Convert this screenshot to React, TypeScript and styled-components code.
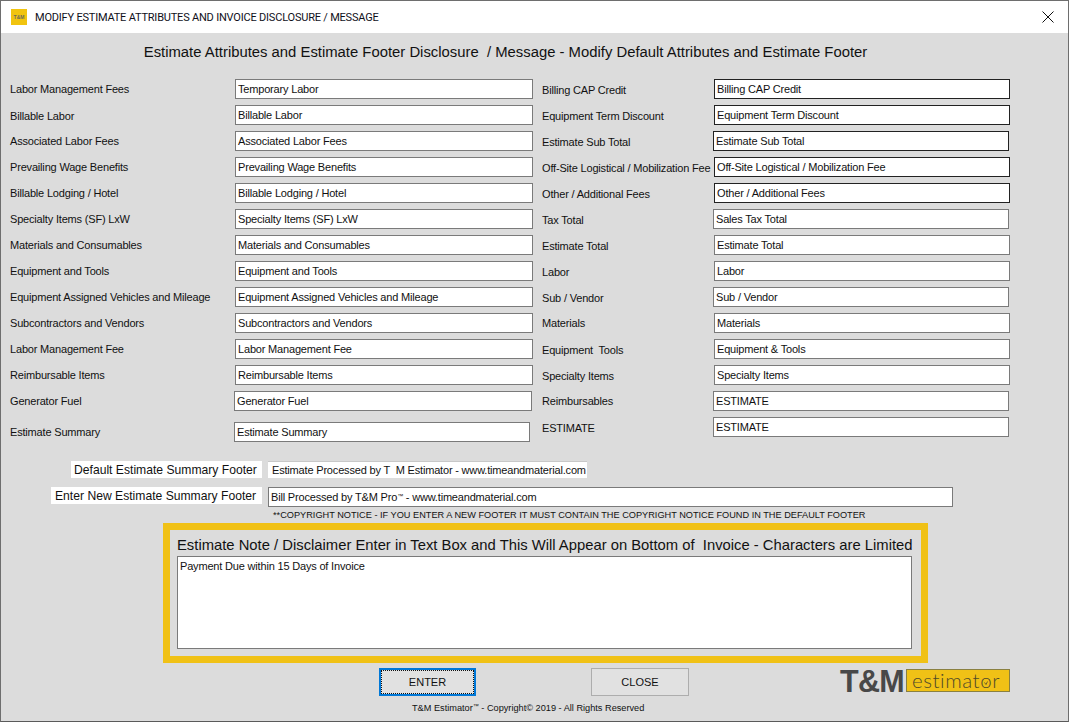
import React from "react";
import styled, { createGlobalStyle } from "styled-components";

const Global = createGlobalStyle`
  html, body { margin: 0; padding: 0; background: #dcdcdc; overflow: hidden; }
  * { box-sizing: border-box; }
`;

const Window = styled.div`
  width: 1069px;
  height: 722px;
  display: flex;
  flex-direction: column;
  background: #dcdcdc;
  border: 1px solid #6e6e6e;
  border-bottom-color: #5a5a5a;
  font-family: "Liberation Sans", Arial, sans-serif;
  color: #111;
  overflow: hidden;
`;
const TitleBar = styled.div`
  height: 32px;
  flex: none;
  background: #fff;
  display: flex;
  align-items: center;
  padding: 0 10px;
`;
const AppIcon = styled.div`
  width: 16px;
  height: 16px;
  background: #f1c40f;
  display: flex;
  align-items: center;
  justify-content: center;
  font-size: 5px;
  font-weight: 700;
  color: #6b6b5a;
  margin-right: 8px;
`;
const TitleText = styled.div`
  font-family: Roboto, sans-serif;
  font-size: 11px;
  letter-spacing: -0.2px;
  color: #10101a;
  flex: 1;
`;
const CloseIcon = styled.svg`
  width: 12px;
  height: 12px;
  margin-right: 4px;
`;
const Heading = styled.h1`
  margin: 10px 0 0;
  height: 36px;
  font-size: 14.85px;
  font-weight: 400;
  line-height: 18px;
  text-align: center;
  padding-right: 58px;
`;
const Columns = styled.div`
  display: grid;
  grid-template-columns: 532px 1fr;
  height: 382px;
`;
const Column = styled.div`
  display: flex;
  flex-direction: column;
`;
const Row = styled.div<{ $gap?: number }>`
  height: 26px;
  flex: none;
  display: flex;
  align-items: flex-start;
  margin-top: ${(p) => p.$gap ?? 0}px;
`;
const Label = styled.div<{ $w: number; $left: number; $down?: number }>`
  width: ${(p) => p.$w}px;
  margin-left: ${(p) => p.$left}px;
  padding-top: ${(p) => 3 + (p.$down ?? 0)}px;
  font-size: 11px;
  letter-spacing: -0.18px;
  line-height: 14px;
  white-space: nowrap;
  flex: none;
`;
const Field = styled.div<{ $w: number; $dark?: boolean }>`
  width: ${(p) => p.$w}px;
  height: 20px;
  flex: none;
  background: #fff;
  border: 1px solid ${(p) => (p.$dark ? "#222" : "#7a7a7a")};
  padding: 0 2px;
  font-size: 11px;
  letter-spacing: -0.18px;
  line-height: 18px;
  white-space: nowrap;
  overflow: hidden;
`;
const FooterRow = styled.div<{ $h: number }>`
  height: ${(p) => p.$h}px;
  flex: none;
  display: flex;
  align-items: flex-start;
`;
const FooterLabel = styled.div<{ $w: number; $left: number; $pad: number }>`
  width: ${(p) => p.$w}px;
  height: 17px;
  margin-left: ${(p) => p.$left}px;
  background: #fff;
  font-size: 12.15px;
  line-height: 19px;
  padding-left: ${(p) => p.$pad}px;
  white-space: nowrap;
  overflow: hidden;
  flex: none;
`;
const FooterValue = styled.div`
  width: 319px;
  height: 17px;
  margin-left: 6px;
  background: #fff;
  border-top: 1px solid #c8c8c8;
  font-size: 11px;
  letter-spacing: -0.18px;
  line-height: 17px;
  padding-left: 4px;
  white-space: nowrap;
`;
const FooterField = styled(Field)`
  margin-left: 6px;
`;
const Notice = styled.div`
  height: 16px;
  flex: none;
  margin-left: 272px;
  font-size: 9.2px;
  line-height: 16px;
  white-space: nowrap;
`;
const NoteBox = styled.section`
  width: 765px;
  height: 140px;
  margin-left: 162px;
  border: 7px solid #f0c116;
  padding: 6px 7px 7px 7px;
  flex: none;
`;
const NoteTitle = styled.div`
  font-size: 14.8px;
  line-height: 18px;
  height: 20px;
  white-space: nowrap;
`;
const NoteArea = styled.div`
  width: 735px;
  height: 93px;
  background: #fff;
  border: 1px solid #7a7a7a;
  padding: 2px;
  font-size: 11px;
  letter-spacing: -0.18px;
  line-height: 14px;
`;
const BottomRow = styled.div`
  margin-top: 5px;
  height: 28px;
  flex: none;
  display: flex;
  align-items: flex-start;
`;
const EnterButton = styled.button`
  width: 97px;
  height: 28px;
  margin-left: 378px;
  background: #e1e1e1;
  border: 2px solid #0078d7;
  outline: 1px dotted #111;
  outline-offset: -3px;
  font: 11px "Liberation Sans", Arial, sans-serif;
  color: #111;
  padding: 0;
`;
const CloseButton = styled.button`
  width: 98px;
  height: 28px;
  margin-left: 115px;
  background: #e1e1e1;
  border: 1px solid #adadad;
  font: 11px "Liberation Sans", Arial, sans-serif;
  color: #111;
  padding: 0;
`;
const Logo = styled.div`
  margin-left: 151px;
  display: flex;
  align-items: center;
  height: 25px;
`;
const LogoMark = styled.div`
  font-size: 30.5px;
  font-weight: 700;
  letter-spacing: -0.7px;
  color: #484848;
  line-height: 25px;
  width: 66px;
  margin-top: 2px;
  white-space: nowrap;
`;
const LogoBadge = styled.div`
  position: relative;
  width: 104px;
  height: 23px;
  background: #f0c116;
  border: 1px solid #8a8040;
  font-family: Lato, sans-serif;
  font-weight: 300;
  font-size: 20.5px;
  letter-spacing: 0.55px;
  line-height: 20px;
  color: #4f4a2a;
  padding-left: 5px;
  white-space: nowrap;
`;
const LogoTick = styled.svg`
  position: absolute;
  left: 74px;
  top: 8px;
  width: 10px;
  height: 10px;
`;
const Copyright = styled.div`
  margin: 6px 0 0 411px;
  font-size: 9.2px;
  line-height: 12px;
  white-space: nowrap;
`;
const Tm = styled.sup`
  font-size: 6px;
  line-height: 0;
  vertical-align: 3px;
`;

type R = { label: string; value: string; gap?: number; left?: number; w?: number; x?: number; down?: number; dark?: boolean };

const leftRows: R[] = [
  { label: "Labor Management Fees", value: "Temporary Labor" },
  { label: "Billable Labor", value: "Billable Labor", down: 1 },
  { label: "Associated Labor Fees", value: "Associated Labor Fees" },
  { label: "Prevailing Wage Benefits", value: "Prevailing Wage Benefits" },
  { label: "Billable Lodging / Hotel", value: "Billable Lodging / Hotel" },
  { label: "Specialty Items (SF) LxW", value: "Specialty Items (SF) LxW" },
  { label: "Materials and Consumables", value: "Materials and Consumables" },
  { label: "Equipment and Tools", value: "Equipment and Tools" },
  { label: "Equipment Assigned Vehicles and Mileage", value: "Equipment Assigned Vehicles and Mileage" },
  { label: "Subcontractors and Vendors", value: "Subcontractors and Vendors" },
  { label: "Labor Management Fee", value: "Labor Management Fee" },
  { label: "Reimbursable Items", value: "Reimbursable Items" },
  { label: "Generator Fuel", value: "Generator Fuel", left: 9, x: 224 },
  { label: "Estimate Summary", value: "Estimate Summary", gap: 5, x: 224, w: 296 },
];

const rightRows: R[] = [
  { label: "Billing CAP Credit", value: "Billing CAP Credit", dark: true, down: 1 },
  { label: "Equipment Term Discount", value: "Equipment Term Discount", dark: true, down: 1 },
  { label: "Estimate Sub Total", value: "Estimate Sub Total", dark: true, x: 171, down: 1 },
  { label: "Off-Site Logistical / Mobilization Fee", value: "Off-Site Logistical / Mobilization Fee", dark: true, down: 1 },
  { label: "Other / Additional Fees", value: "Other / Additional Fees", dark: true, down: 1 },
  { label: "Tax Total", value: "Sales Tax Total", x: 171, down: 1 },
  { label: "Estimate Total", value: "Estimate Total", down: 1 },
  { label: "Labor", value: "Labor", down: 1 },
  { label: "Sub / Vendor", value: "Sub / Vendor", x: 171, down: 1 },
  { label: "Materials", value: "Materials" },
  { label: "Equipment\u00a0 Tools", value: "Equipment & Tools", down: 1 },
  { label: "Specialty Items", value: "Specialty Items", down: 1 },
  { label: "Reimbursables", value: "ESTIMATE", x: 171 },
  { label: "ESTIMATE", value: "ESTIMATE", x: 171, down: 1 },
];

function FieldRow({ r, baseLeft, baseX, baseW }: { r: R; baseLeft: number; baseX: number; baseW: number }) {
  const left = r.left ?? baseLeft;
  const x = r.x ?? baseX;
  return (
    <Row $gap={r.gap}>
      <Label $left={left} $w={baseLeft + x - left} $down={r.down}>{r.label}</Label>
      <Field $w={r.w ?? baseW} $dark={r.dark}>{r.value}</Field>
    </Row>
  );
}

export default function App() {
  return (
    <Window>
      <Global />
      <TitleBar>
        <AppIcon>T&amp;M</AppIcon>
        <TitleText>MODIFY ESTIMATE ATTRIBUTES AND INVOICE DISCLOSURE / MESSAGE</TitleText>
        <CloseIcon viewBox="0 0 12 12">
          <path d="M0.5 0.5 L11.5 11.5 M11.5 0.5 L0.5 11.5" stroke="#111" strokeWidth="1" fill="none" />
        </CloseIcon>
      </TitleBar>
      <Heading>Estimate Attributes and Estimate Footer Disclosure&nbsp; / Message - Modify Default Attributes and Estimate Footer</Heading>
      <Columns>
        <Column>
          {leftRows.map((r) => (
            <FieldRow key={r.label} r={r} baseLeft={9} baseX={225} baseW={298} />
          ))}
        </Column>
        <Column>
          {rightRows.map((r, i) => (
            <FieldRow key={i} r={r} baseLeft={9} baseX={172} baseW={296} />
          ))}
        </Column>
      </Columns>
      <FooterRow $h={26}>
        <FooterLabel $left={70} $w={191} $pad={3}>Default Estimate Summary Footer</FooterLabel>
        <FooterValue>Estimate Processed by T&nbsp; M Estimator - www.timeandmaterial.com</FooterValue>
      </FooterRow>
      <FooterRow $h={20}>
        <FooterLabel $left={50} $w={211} $pad={4}>Enter New Estimate Summary Footer</FooterLabel>
        <FooterField $w={685}>Bill Processed by T&amp;M Pro<Tm>™</Tm> - www.timeandmaterial.com</FooterField>
      </FooterRow>
      <Notice>**COPYRIGHT NOTICE - IF YOU ENTER A NEW FOOTER IT MUST CONTAIN THE COPYRIGHT NOTICE FOUND IN THE DEFAULT FOOTER</Notice>
      <NoteBox>
        <NoteTitle>Estimate Note / Disclaimer Enter in Text Box and This Will Appear on Bottom of&nbsp; Invoice - Characters are Limited</NoteTitle>
        <NoteArea>Payment Due within 15 Days of Invoice</NoteArea>
      </NoteBox>
      <BottomRow>
        <EnterButton>ENTER</EnterButton>
        <CloseButton>CLOSE</CloseButton>
        <Logo>
          <LogoMark>T&amp;M</LogoMark>
          <LogoBadge>
            estimator
            <LogoTick viewBox="0 0 10 10">
              <path d="M3.5 4.5 L5 6.5 L6.5 3.5" stroke="#4f4a2a" strokeWidth="0.8" fill="none" />
            </LogoTick>
          </LogoBadge>
        </Logo>
      </BottomRow>
      <Copyright>T&amp;M Estimator<Tm>™</Tm> - Copyright© 2019 - All Rights Reserved</Copyright>
    </Window>
  );
}
